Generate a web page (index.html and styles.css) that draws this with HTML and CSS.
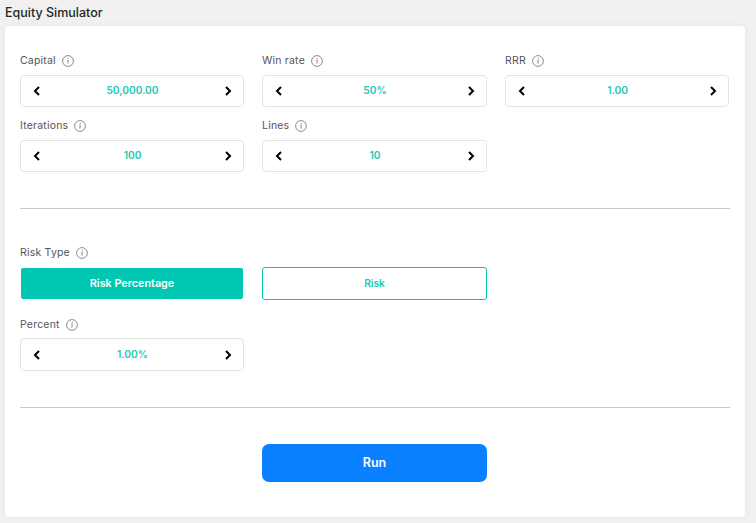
FILE: index.html
```html
<!DOCTYPE html>
<html lang="en">
<head>
<meta charset="utf-8">
<title>Equity Simulator</title>
<link rel="stylesheet" href="styles.css">
</head>
<body>
<svg class="sprite" width="0" height="0" aria-hidden="true">
  <symbol id="info" viewBox="0 0 12 12"><circle cx="6" cy="6" r="5.4" fill="none" stroke="currentColor" stroke-width=".75"/><path d="M5.4 5.3h.9l-.5 3.3M6.3 3v1" fill="none" stroke="currentColor" stroke-width=".8"/></symbol>
  <symbol id="left" viewBox="0 0 8 10"><path d="M6 1 2 5l4 4" fill="none" stroke="currentColor" stroke-width="2"/></symbol>
  <symbol id="right" viewBox="0 0 8 10"><path d="M2 1l4 4-4 4" fill="none" stroke="currentColor" stroke-width="2"/></symbol>
</svg>
<h1 class="title">Equity Simulator</h1>
<main class="card">
  <section class="grid first">
    <div class="field">
      <div class="label">Capital <svg class="info"><use href="#info"/></svg></div>
      <div class="stepper"><svg class="arrow"><use href="#left"/></svg><span class="value">50,000.00</span><svg class="arrow"><use href="#right"/></svg></div>
    </div>
    <div class="field">
      <div class="label">Win rate <svg class="info"><use href="#info"/></svg></div>
      <div class="stepper"><svg class="arrow"><use href="#left"/></svg><span class="value">50%</span><svg class="arrow"><use href="#right"/></svg></div>
    </div>
    <div class="field">
      <div class="label">RRR <svg class="info"><use href="#info"/></svg></div>
      <div class="stepper"><svg class="arrow"><use href="#left"/></svg><span class="value">1.00</span><svg class="arrow"><use href="#right"/></svg></div>
    </div>
    <div class="field">
      <div class="label">Iterations <svg class="info"><use href="#info"/></svg></div>
      <div class="stepper"><svg class="arrow"><use href="#left"/></svg><span class="value">100</span><svg class="arrow"><use href="#right"/></svg></div>
    </div>
    <div class="field">
      <div class="label">Lines <svg class="info"><use href="#info"/></svg></div>
      <div class="stepper"><svg class="arrow"><use href="#left"/></svg><span class="value">10</span><svg class="arrow"><use href="#right"/></svg></div>
    </div>
  </section>
  <hr class="rule rule-one">
  <section class="grid second">
    <div class="label span">Risk Type <svg class="info"><use href="#info"/></svg></div>
    <button class="choice active">Risk Percentage</button>
    <button class="choice">Risk</button>
    <div class="field percent">
      <div class="label">Percent <svg class="info"><use href="#info"/></svg></div>
      <div class="stepper"><svg class="arrow"><use href="#left"/></svg><span class="value">1.00%</span><svg class="arrow"><use href="#right"/></svg></div>
    </div>
  </section>
  <hr class="rule rule-two">
  <section class="grid actions">
    <button class="run">Run</button>
  </section>
</main>
</body>
</html>
```
FILE: styles.css
```css
* { box-sizing: border-box; }
html, body { height: 100%; }
body {
  margin: 0;
  padding: 0 11px 6px 5px;
  background: #f1f1f1;
  font-family: Inter, "Noto Sans", "Liberation Sans", sans-serif;
  overflow: hidden;
}
.sprite { position: absolute; }
.title {
  margin: 0;
  height: 26px;
  padding-top: 5px;
  font-size: 12.5px;
  line-height: 16px;
  font-weight: 500;
  color: #262626;
}
.card {
  height: 491px;
  padding: 27px 16px 0 15px;
  background: #fff;
  border-radius: 4px;
  box-shadow: 0 0 6px rgba(0,0,0,.06);
}
.grid {
  display: grid;
  grid-template-columns: 224px 225px 224px;
  column-gap: 18px;
}
.first { row-gap: 11px; }
.label {
  display: flex;
  align-items: center;
  gap: 6px;
  height: 16px;
  margin-bottom: 6px;
  font-size: 10.5px;
  line-height: 16px;
  color: #555;
  letter-spacing: .2px;
}
.info { width: 12px; height: 12px; color: #666; flex: none; }
.field { min-width: 0; }
.stepper {
  display: flex;
  align-items: center;
  justify-content: space-between;
  height: 32px;
  padding: 0 11px 0 12px;
  background: #fff;
  border: 1px solid #e4e4e4;
  border-radius: 4px;
}
.arrow { width: 8px; height: 10px; color: #000; flex: none; }
.value {
  margin-bottom: 2px;
  font-size: 10.2px;
  font-weight: 600;
  color: #22c9b4;
}
.rule {
  margin: 0;
  border: 0;
  border-top: 1px solid #c8c8c8;
  width: 710px;
}
.rule-one { margin-top: 36px; }
.second { margin-top: 36px; }
.span { grid-column: 1 / -1; margin-bottom: 6px; }
.choice {
  grid-row: 2;
  height: 33px;
  padding: 0 0 2px;
  background: #fff;
  border: 1px solid #00c7b1;
  border-radius: 3px;
  font: 600 10.2px Inter, "Noto Sans", "Liberation Sans", sans-serif;
  color: #22c9b4;
}
.choice.active {
  padding: 0;
  background: #00c7b1 padding-box;
  border-color: transparent;
  color: #fff;
  font-size: 10.8px;
}
.percent { grid-column: 1; grid-row: 3; margin-top: 17px; }
.percent .label { margin-bottom: 5px; }
.percent .stepper { height: 33px; }
.rule-two { margin-top: 36px; }
.actions { margin-top: 36px; }
.run {
  grid-column: 2;
  height: 38px;
  padding: 0 0 1px;
  background: #0a7fff;
  border: 0;
  border-radius: 7px;
  color: #fff;
  font: 600 12.5px Inter, "Noto Sans", "Liberation Sans", sans-serif;
}
```
